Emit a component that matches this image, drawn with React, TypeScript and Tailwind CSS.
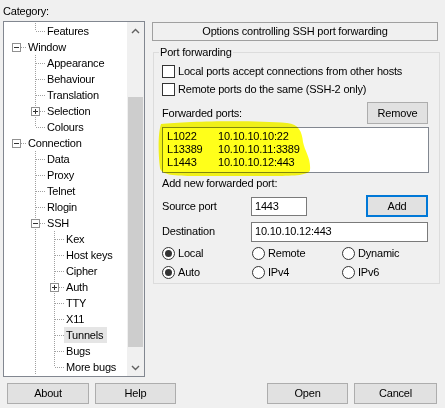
import type { FC } from "react";

type Guide = " " | "I";
type TreeRow = {
  label: string;
  guides: Guide[];
  own: "T" | "L" | "root";
  box?: "minus" | "plus";
  selected?: boolean;
};

const rows: TreeRow[] = [
  { label: "Features", guides: [" "], own: "L" },
  { label: "Window", guides: [], own: "root", box: "minus" },
  { label: "Appearance", guides: [" "], own: "T" },
  { label: "Behaviour", guides: [" "], own: "T" },
  { label: "Translation", guides: [" "], own: "T" },
  { label: "Selection", guides: [" "], own: "T", box: "plus" },
  { label: "Colours", guides: [" "], own: "L" },
  { label: "Connection", guides: [], own: "root", box: "minus" },
  { label: "Data", guides: [" "], own: "T" },
  { label: "Proxy", guides: [" "], own: "T" },
  { label: "Telnet", guides: [" "], own: "T" },
  { label: "Rlogin", guides: [" "], own: "T" },
  { label: "SSH", guides: [" "], own: "T", box: "minus" },
  { label: "Kex", guides: [" ", "I"], own: "T" },
  { label: "Host keys", guides: [" ", "I"], own: "T" },
  { label: "Cipher", guides: [" ", "I"], own: "T" },
  { label: "Auth", guides: [" ", "I"], own: "T", box: "plus" },
  { label: "TTY", guides: [" ", "I"], own: "T" },
  { label: "X11", guides: [" ", "I"], own: "T" },
  { label: "Tunnels", guides: [" ", "I"], own: "T", selected: true },
  { label: "Bugs", guides: [" ", "I"], own: "T" },
  { label: "More bugs", guides: [" ", "I"], own: "L" },
];

const forwarded = [
  { src: "L1022", dst: "10.10.10.10:22" },
  { src: "L13389", dst: "10.10.10.11:3389" },
  { src: "L1443", dst: "10.10.10.12:443" },
];

const dot = { stroke: "#a0a0a0", strokeDasharray: "1 1" };

const Cell: FC<{ kind: Guide | "T" | "L" | "root"; box?: "minus" | "plus" }> = ({ kind, box }) => (
  <svg width="19" height="16" className="shrink-0">
    {kind === "I" || kind === "T" ? <line x1="9.5" y1="0" x2="9.5" y2="16" {...dot} /> : null}
    {kind === "L" ? <line x1="9.5" y1="0" x2="9.5" y2="8" {...dot} /> : null}
    {kind === "T" || kind === "L" || kind === "root" ? (
      <line x1="10" y1="8.5" x2="19" y2="8.5" {...dot} />
    ) : null}
    {box ? (
      <g>
        <rect x="5.5" y="4.5" width="8" height="8" fill="#fff" stroke="#919191" />
        <line x1="7" y1="8.5" x2="12" y2="8.5" stroke="#333" />
        {box === "plus" ? <line x1="9.5" y1="6" x2="9.5" y2="11" stroke="#333" /> : null}
      </g>
    ) : null}
  </svg>
);

const Chevron: FC<{ up?: boolean }> = ({ up }) => (
  <svg width="9" height="6">
    <polyline
      points={up ? "1,5 4.5,1.5 8,5" : "1,1 4.5,4.5 8,1"}
      fill="none"
      stroke="#606060"
      strokeWidth="1.4"
    />
  </svg>
);

const Checkbox: FC<{ label: string }> = ({ label }) => (
  <div className="flex h-[18px] items-center gap-[3px]">
    <div className="h-[13px] w-[13px] border border-[#333] bg-white" />
    <span>{label}</span>
  </div>
);

const Radio: FC<{ label: string; checked?: boolean }> = ({ label, checked }) => (
  <div className="flex items-center gap-[3px]">
    <div className="flex h-[13px] w-[13px] items-center justify-center rounded-full border border-[#333] bg-white">
      {checked ? <div className="h-[7px] w-[7px] rounded-full bg-[#333]" /> : null}
    </div>
    <span>{label}</span>
  </div>
);

const Button: FC<{ label: string; className?: string }> = ({ label, className }) => (
  <div
    className={
      "flex items-center justify-center border bg-[#e1e1e1] " +
      (className ?? "border-[#adadad]")
    }
  >
    {label}
  </div>
);

const App: FC = () => {
  return (
    <div className="relative h-[408px] w-[445px] overflow-hidden bg-[#f0f0f0] font-['Liberation_Sans',Arial,sans-serif] text-[11px] tracking-[-0.2px] text-black">
      <div className="flex">
        {/* category tree */}
        <div className="ml-[3px] w-[142px]">
          <div className="pt-[4px] leading-[14px]">Category:</div>
          <div className="mt-[3px] flex h-[356px] border border-[#828790] bg-white">
            <div className="flex-1 overflow-hidden pl-[3px] pt-[1px]">
              {rows.map((r) => (
                <div key={r.label} className="flex h-[16px] items-center">
                  {r.guides.map((g, i) => (
                    <Cell key={i} kind={g} />
                  ))}
                  <Cell kind={r.own} box={r.box} />
                  <span
                    className={
                      "leading-[16px] " +
                      (r.selected ? "bg-[#e5e5e5] pl-[2px] pr-[4px]" : "ml-[1px] px-[1px]")
                    }
                  >
                    {r.label}
                  </span>
                </div>
              ))}
            </div>
            <div className="flex w-[17px] flex-col bg-[#f0f0f0]">
              <div className="flex h-[17px] items-center justify-center">
                <Chevron up />
              </div>
              <div className="flex-1 px-[1px]">
                <div className="mt-[58px] h-[250px] bg-[#cdcdcd]" />
              </div>
              <div className="flex h-[17px] items-center justify-center">
                <Chevron />
              </div>
            </div>
          </div>
        </div>

        {/* options panel */}
        <div className="ml-[7px] w-[288px]">
          <div className="mt-[22px] flex h-[19px] w-[286px] items-center justify-center border border-[#a0a0a0]">
            Options controlling SSH port forwarding
          </div>
          <fieldset className="ml-[1px] mt-[4px] w-[287px] border border-[#dcdcdc] pb-[1px] pl-[8px] pr-[10px]">
            <legend className="-ml-[3px] px-[1px] leading-[14px]">Port forwarding</legend>
            <div className="mt-[3px]">
              <Checkbox label="Local ports accept connections from other hosts" />
              <Checkbox label="Remote ports do the same (SSH-2 only)" />
            </div>
            <div className="mt-[4px] flex h-[22px] items-center justify-between">
              <span>Forwarded ports:</span>
              <Button label="Remove" className="mr-[1px] h-[22px] w-[61px] border-[#adadad]" />
            </div>
            <div className="mt-[3px] h-[46px] border border-[#828790] bg-white pl-[4px] pt-[2px] leading-[13px]">
              {forwarded.map((f) => (
                <div key={f.src} className="relative z-10 flex">
                  <span className="w-[51px]">{f.src}</span>
                  <span>{f.dst}</span>
                </div>
              ))}
            </div>
            <div className="mt-[3px] leading-[14px]">Add new forwarded port:</div>
            <div className="mt-[5px] flex h-[22px] items-center">
              <span className="w-[89px]">Source port</span>
              <div className="flex h-[19px] w-[56px] items-center border border-[#7a7a7a] bg-white px-[3px]">
                1443
              </div>
              <Button label="Add" className="ml-auto mr-[1px] h-[22px] w-[62px] border-2 border-[#0078d7]" />
            </div>
            <div className="mt-[4px] flex h-[21px] items-center">
              <span className="w-[89px]">Destination</span>
              <div className="flex h-[20px] w-[177px] items-center border border-[#7a7a7a] bg-white px-[3px]">
                10.10.10.12:443
              </div>
            </div>
            <div className="mt-[2px] grid h-[19px] grid-cols-[90px_90px_1fr] items-center">
              <Radio label="Local" checked />
              <Radio label="Remote" />
              <Radio label="Dynamic" />
            </div>
            <div className="grid h-[19px] grid-cols-[90px_90px_1fr] items-center">
              <Radio label="Auto" checked />
              <Radio label="IPv4" />
              <Radio label="IPv6" />
            </div>
          </fieldset>
        </div>
      </div>

      {/* bottom buttons */}
      <div className="mt-[6px] flex pl-[7px] pr-[8px]">
        <Button label="About" className="h-[21px] w-[82px] border-[#adadad]" />
        <Button label="Help" className="ml-[6px] h-[21px] w-[81px] border-[#adadad]" />
        <Button label="Open" className="ml-auto h-[21px] w-[81px] border-[#adadad]" />
        <Button label="Cancel" className="ml-[6px] h-[21px] w-[83px] border-[#adadad]" />
      </div>

      {/* highlighter mark over the forwarded ports list */}
      <svg
        width="162"
        height="62"
        className="pointer-events-none absolute left-[155px] top-[118px] mix-blend-multiply"
      >
        <path
          d="M6 6 C30 3 100 2 132 5 C144 6 147 14 148 24 C150 34 156 40 155 52 C154 57 140 58 120 58 L40 58 C20 58 6 57 5 50 C3 35 3 15 6 6 Z"
          fill="#ffff1a"
        />
      </svg>
    </div>
  );
};

export default App;
